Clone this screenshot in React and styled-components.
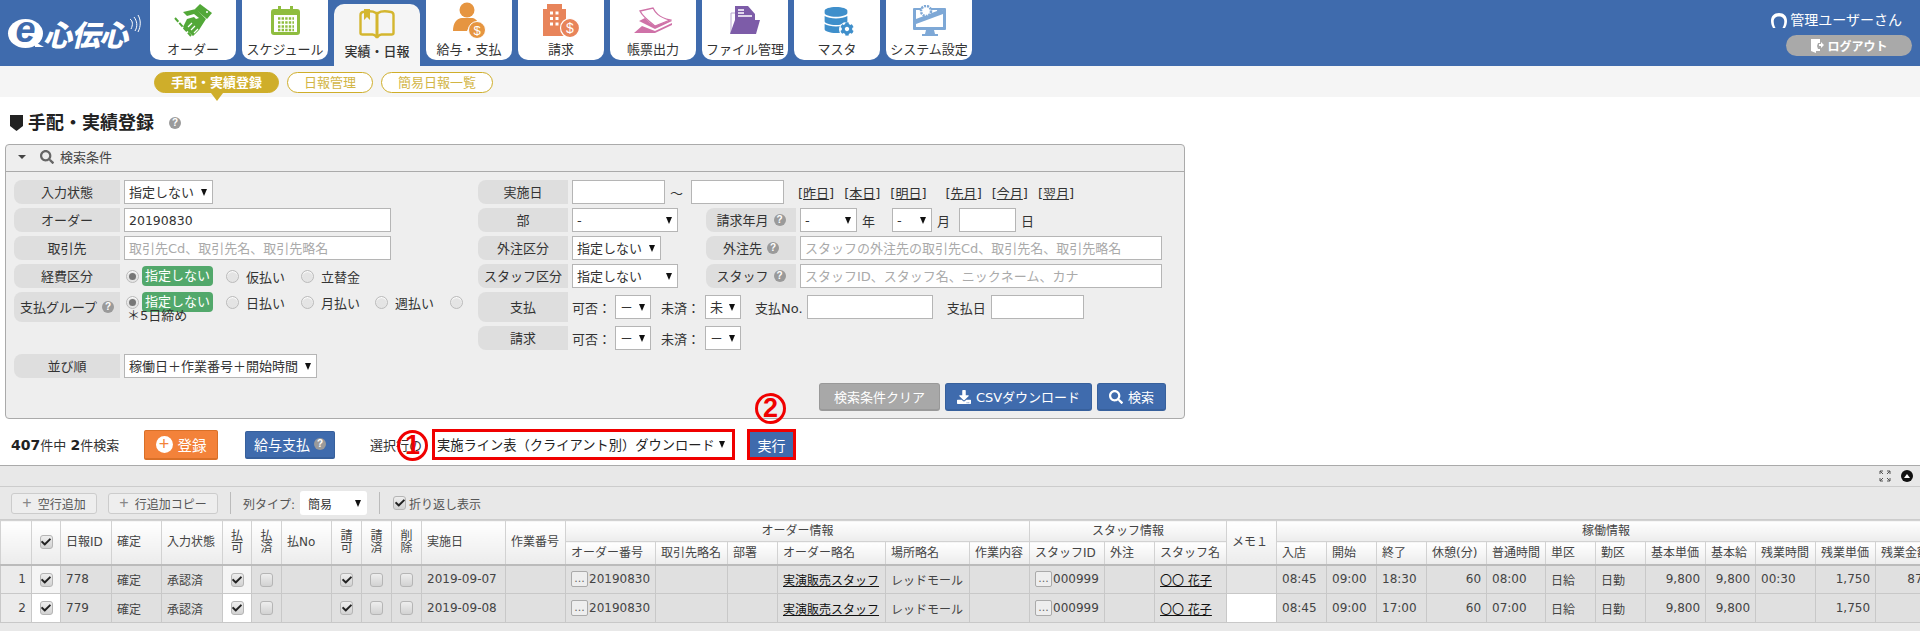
import React from 'react';
import styled, { createGlobalStyle } from 'styled-components';
import { FaSearch, FaDownload, FaCheck, FaDatabase, FaCog } from 'react-icons/fa';

const GlobalStyle = createGlobalStyle`
    html, body {
        margin: 0;
        height: 631px;
        overflow: hidden;
        background: #fff;
        color: #333;
        font-family: "DejaVu Sans", "Noto Sans CJK JP", sans-serif;
        font-size: 13px;
    }
    * { box-sizing: border-box; }
`;

const BLUE = '#3f6bad';
const GOLD = '#cfae2a';

const Page = styled.div`
    width: 1920px;
    height: 631px;
    overflow: hidden;
`;

/* ---------- header ---------- */

const TopBar = styled.header`
    height: 66px;
    background: ${BLUE};
    display: flex;
`;

const Logo = styled.div`
    width: 150px;
    display: flex;
    align-items: center;
    padding: 0 0 0 8px;
    color: #fff;
`;

const LogoE = styled.span`
    position: relative;
    width: 35px;
    height: 29px;
    border-radius: 50%;
    background: #fff;
    color: ${BLUE};
    font: italic bold 36px/22px "Liberation Sans", sans-serif;
    text-align: center;
    flex: none;

    &::after {
        content: "";
        position: absolute;
        right: -1px;
        bottom: 1px;
        border-left: 9px solid #fff;
        border-top: 5px solid transparent;
    }
`;

const LogoText = styled.span`
    font: 900 29px/1 "Noto Sans CJK JP", sans-serif;
    letter-spacing: -1px;
    transform: skewX(-14deg);
    margin-left: 3px;
    white-space: nowrap;
    flex: none;
`;

const LogoWaves = styled.svg`
    width: 12px;
    height: 20px;
    margin: -18px 0 0 -1px;
    flex: none;
`;

const Tabs = styled.nav`
    display: flex;
    gap: 6px;
`;

const Tab = styled.a`
    width: 86px;
    height: ${(p) => (p.$active ? '62px' : '60px')};
    margin-top: ${(p) => (p.$active ? '4px' : '0')};
    background: ${(p) => (p.$active ? '#f5f5f5' : '#fff')};
    border-radius: ${(p) => (p.$active ? '10px 10px 0 0' : '0 0 10px 10px')};
    display: flex;
    flex-direction: column;
    align-items: center;
    color: #333;
    font-size: 13px;
    font-weight: ${(p) => (p.$active ? 500 : 400)};
    line-height: 18px;
    white-space: nowrap;
`;

const TabIcon = styled.div`
    height: ${(p) => (p.$active ? '39px' : '41px')};
    display: flex;
    align-items: center;
    justify-content: center;
`;

const UserBox = styled.div`
    margin-left: auto;
    width: 150px;
    padding: 11px 8px 0 0;
    display: flex;
    flex-direction: column;
    align-items: flex-end;
`;

const UserName = styled.div`
    display: flex;
    align-items: center;
    gap: 3px;
    color: #fff;
    font-size: 14px;
    line-height: 18px;
    white-space: nowrap;
    padding-right: 10px;
`;

const LogoutPill = styled.a`
    width: 126px;
    height: 21px;
    margin-top: 6px;
    border-radius: 11px;
    background: #a9a9a9;
    color: #fff;
    font-size: 12px;
    font-weight: 700;
    display: flex;
    align-items: center;
    justify-content: center;
    gap: 3px;
`;

const SubNav = styled.nav`
    height: 31px;
    background: #f5f5f5;
    display: flex;
    gap: 8px;
    padding: 6px 0 0 154px;
`;

const Pill = styled.a`
    position: relative;
    height: 21px;
    padding: 0 16px;
    border-radius: 11px;
    border: 1px solid ${GOLD};
    background: ${(p) => (p.$active ? GOLD : '#fff')};
    color: ${(p) => (p.$active ? '#fff' : '#d2b545')};
    font-weight: ${(p) => (p.$active ? 700 : 400)};
    font-size: 13px;
    line-height: 19px;
    white-space: nowrap;

    ${(p) => p.$active && `
        &::after {
            content: "";
            position: absolute;
            left: 50%;
            top: 20px;
            margin-left: -6px;
            border: 6px solid transparent;
            border-top: 8px solid ${GOLD};
            border-bottom: 0;
        }
    `}
`;

/* ---------- title ---------- */

const TitleRow = styled.div`
    height: 47px;
    padding: 12px 0 0 10px;
    display: flex;
    align-items: center;
    gap: 5px;
`;

const TitleText = styled.h1`
    margin: 0 10px 8px 0;
    font-size: 18px;
    line-height: 24px;
    font-weight: 700;
    color: #222;
`;

const TitleMark = styled.svg`
    width: 13px;
    height: 17px;
    margin-bottom: 8px;
`;

const Help = styled.span`
    width: 12px;
    height: 12px;
    border-radius: 50%;
    background: #9a9a9a;
    color: #fff;
    font: bold 10px/12px "Liberation Sans", sans-serif;
    text-align: center;
    display: inline-block;
    flex: none;
    margin: ${(p) => p.$margin || '0'};
`;

/* ---------- search panel ---------- */

const Panel = styled.section`
    width: 1180px;
    height: 275px;
    margin-left: 5px;
    border: 1px solid #aaa;
    border-radius: 4px;
    background: #eee;
`;

const PanelHead = styled.div`
    height: 27px;
    border-bottom: 1px solid #aaa;
    display: flex;
    align-items: center;
    padding: 0 0 3px 12px;
    color: #444;
    font-size: 13px;
`;

const Caret = styled.span`
    border: 4px solid transparent;
    border-top: 4px solid #444;
    border-bottom: 0;
    margin-right: 14px;
`;

const Columns = styled.div`
    display: flex;
    padding: 8px 0 0 8px;
`;

const LeftColumn = styled.div`
    width: 464px;
`;

const RightColumn = styled.div`
    flex: 1;
`;

const Row = styled.div`
    display: flex;
    align-items: ${(p) => (p.$top ? 'flex-start' : 'center')};
    height: ${(p) => p.$h || 24}px;
    margin-bottom: ${(p) => p.$mb ?? 4}px;
    white-space: nowrap;
`;

const FieldLabel = styled.div`
    width: ${(p) => p.$w}px;
    height: ${(p) => p.$h || 24}px;
    margin-left: ${(p) => p.$ml || 0}px;
    margin-right: 4px;
    padding-bottom: 1px;
    flex: none;
    background: #dedede;
    border-radius: 8px 0 0 8px;
    display: flex;
    align-items: center;
    justify-content: center;
    color: #333;
    gap: 5px;
`;

const TextInput = styled.input`
    width: ${(p) => p.$w}px;
    height: 24px;
    margin-left: ${(p) => p.$ml || 0}px;
    border: 1px solid #b5b5b5;
    background: #fff;
    padding: 0 4px;
    color: #333;
    font: 12.5px "DejaVu Sans", "Noto Sans CJK JP", sans-serif;
    flex: none;

    &::placeholder {
        color: #aaa;
        font-size: 13px;
        opacity: 1;
    }
`;

const SelectWrap = styled.span`
    position: relative;
    display: inline-block;
    flex: none;
    width: ${(p) => p.$w}px;
    height: 24px;
    margin-left: ${(p) => p.$ml || 0}px;

    &::after {
        content: "";
        position: absolute;
        right: 6px;
        top: 9px;
        border: 3.5px solid transparent;
        border-top: 7px solid #111;
        border-bottom: 0;
        pointer-events: none;
    }
`;

const SelectBox = styled.select`
    appearance: none;
    width: 100%;
    height: 100%;
    border: 1px solid #b5b5b5;
    border-radius: 0;
    background: #fff;
    padding: 0 4px;
    color: #333;
    font: 13px "DejaVu Sans", "Noto Sans CJK JP", sans-serif;
`;

const Select = ({ w, ml, value }) => (
    <SelectWrap $w={w} $ml={ml}>
        <SelectBox defaultValue={value}><option>{value}</option></SelectBox>
    </SelectWrap>
);

const Unit = styled.span`
    margin-left: ${(p) => p.$ml || 0}px;
    flex: none;
`;

const DateLink = styled.a`
    margin-left: ${(p) => p.$ml || 0}px;
    color: #333;
    font-size: 13px;

    span { text-decoration: underline; }
`;

const RadioList = styled.div`
    display: flex;
    flex-wrap: wrap;
    align-items: center;
    width: 344px;
    padding-left: 2px;
    row-gap: 0;
`;

const RadioOption = styled.label`
    width: ${(p) => p.$w || 75}px;
    height: 20px;
    display: flex;
    align-items: center;
    gap: ${(p) => (p.$on ? '3px' : '7px')};
`;

const RadioDot = styled.span`
    width: 13px;
    height: 13px;
    border-radius: 50%;
    border: 1px solid #bbb;
    background: #e4e4e4;
    box-shadow: inset 0 1px 1px #fff;
    display: flex;
    align-items: center;
    justify-content: center;
    flex: none;

    ${(p) => p.$on && `
        &::after {
            content: "";
            width: 7px;
            height: 7px;
            border-radius: 50%;
            background: #777;
        }
    `}
`;

const OnBadge = styled.span`
    width: 71px;
    height: 20px;
    border-radius: 4px;
    background: #52a86b;
    color: #fff;
    text-align: center;
    line-height: 19px;
`;

const Note = styled.div`
    width: 100%;
    margin: -4px 0 0 1px;
    line-height: 15px;
`;

const Radio = ({ w, on, children }) => (
    <RadioOption $w={w} $on={on}>
        <RadioDot $on={on} />
        {on ? <OnBadge>{children}</OnBadge> : <span>{children}</span>}
    </RadioOption>
);

const PanelActions = styled.div`
    display: flex;
    justify-content: flex-end;
    gap: 5px;
    padding: 5px 18px 0 0;
`;

const PanelButton = styled.button`
    width: ${(p) => p.$w}px;
    height: 28px;
    border: 1px solid ${(p) => (p.$gray ? '#999' : '#37609c')};
    border-bottom-width: 2px;
    border-radius: 3px;
    background: ${(p) => (p.$gray ? '#a8a8a8' : BLUE)};
    color: #fff;
    font: 13px "DejaVu Sans", "Noto Sans CJK JP", sans-serif;
    display: flex;
    align-items: center;
    justify-content: center;
    gap: 5px;
    padding: 0;
    white-space: nowrap;
`;

/* ---------- action row ---------- */

const ActionRow = styled.div`
    height: 46px;
    display: flex;
    align-items: center;
    padding: 5px 0 0 11px;
    white-space: nowrap;
`;

const Count = styled.div`
    width: 133px;
    font-size: 13px;

    b { font-size: 14px; color: #222; }
`;

const OrangeButton = styled.button`
    width: 74px;
    height: 30px;
    border: 1px solid #d97028;
    border-bottom-width: 2px;
    border-radius: 2px;
    background: #f3823a;
    color: #fff;
    font: 14.5px "Noto Sans CJK JP", sans-serif;
    display: flex;
    align-items: center;
    justify-content: center;
    gap: 5px;
    padding: 0;
`;

const PlusCircle = styled.span`
    width: 17px;
    height: 17px;
    border-radius: 50%;
    background: #fff;
    color: #f3823a;
    font: 18px/16px "Liberation Sans", sans-serif;
    text-align: center;
`;

const PayButton = styled.button`
    width: 90px;
    height: 28px;
    margin-left: 27px;
    border: 1px solid #37609c;
    border-bottom-width: 2px;
    border-radius: 2px;
    background: ${BLUE};
    color: #fff;
    font: 14px "Noto Sans CJK JP", sans-serif;
    display: flex;
    align-items: center;
    justify-content: center;
    gap: 4px;
    padding: 0;
`;

const SelectLabel = styled.span`
    position: relative;
    margin-left: 35px;
    width: 62px;
    font-size: 13px;
    flex: none;
`;

const RedSelect = styled.div`
    width: 303px;
    height: 31px;
    border: 3px solid #f00000;
    background: #fff;
    display: flex;
    align-items: center;
    justify-content: space-between;
    padding: 0 7px 0 2px;
    font-size: 13.25px;
    color: #222;

    &::after {
        content: "";
        border: 3.5px solid transparent;
        border-top: 7px solid #111;
        border-bottom: 0;
    }
`;

const RunWrap = styled.div`
    position: relative;
    margin-left: 12px;
`;

const RunButton = styled.button`
    display: block;
    width: 49px;
    height: 31px;
    border: 3px solid #f00000;
    background: ${BLUE};
    color: #fff;
    font: 14px "Noto Sans CJK JP", sans-serif;
    padding: 0;
`;

const Marker = styled.span`
    position: absolute;
    left: ${(p) => p.$left}px;
    top: ${(p) => p.$top}px;
    width: 31px;
    height: 31px;
    border: 3px solid #f00000;
    border-radius: 50%;
    color: #f00000;
    font: bold 27px/25px "Liberation Sans", sans-serif;
    text-align: center;
`;

/* ---------- data grid ---------- */

const Grid = styled.section`
    height: 166px;
    overflow: hidden;
    background: #e8e8e8;
    border-top: 1px solid #aaa;
`;

const GridBar = styled.div`
    height: 21px;
    border-bottom: 1px solid #ccc;
    display: flex;
    align-items: center;
    justify-content: flex-end;
    gap: 10px;
    padding-right: 7px;
`;

const CollapseIcon = styled.span`
    width: 12px;
    height: 12px;
    border-radius: 50%;
    background: #111;
    display: flex;
    align-items: center;
    justify-content: center;

    &::after {
        content: "";
        border: 3px solid transparent;
        border-bottom: 4px solid #fff;
        border-top: 0;
    }
`;

const GridTools = styled.div`
    height: 33px;
    border-bottom: 1px solid #ccc;
    display: flex;
    align-items: center;
    padding-left: 11px;
    white-space: nowrap;
    font-size: 12px;
    color: #555;
`;

const ToolButton = styled.button`
    width: ${(p) => p.$w}px;
    height: 21px;
    margin-right: ${(p) => p.$mr || 0}px;
    border: 1px solid #ccc;
    border-radius: 3px;
    background: #eee;
    color: #555;
    font: 12px "Noto Sans CJK JP", sans-serif;
    padding: 0;
    display: flex;
    align-items: center;
    justify-content: center;
    gap: 6px;

    i { font: 16px/1 "Liberation Sans", sans-serif; color: #888; }
`;

const ToolSep = styled.span`
    width: 1px;
    height: 22px;
    background: #bbb;
    margin: 0 ${(p) => p.$r}px 0 ${(p) => p.$l}px;
`;

const TypeSelect = styled.div`
    width: 67px;
    height: 24px;
    margin-left: 5px;
    border-radius: 3px;
    background: #fff;
    color: #333;
    display: flex;
    align-items: center;
    justify-content: space-between;
    padding: 0 6px 0 8px;

    &::after {
        content: "";
        border: 3.5px solid transparent;
        border-top: 7px solid #111;
        border-bottom: 0;
    }
`;

const Table = styled.table`
    width: 1935px;
    table-layout: fixed;
    border-collapse: collapse;
    font-size: 12px;
    color: #444;
`;

const HeadCell = styled.th`
    height: ${(p) => p.$h || 21}px;
    padding: 0 ${(p) => (p.$narrow ? 0 : 5)}px;
    border: 1px solid #d2d2d2;
    border-bottom: ${(p) => (p.$group ? '1px solid #d2d2d2' : '2px solid #bbb')};
    background: linear-gradient(#fff, #ececec);
    font-weight: 400;
    text-align: ${(p) => (p.$center ? 'center' : 'left')};
    white-space: pre-line;
    line-height: 12px;
    overflow: hidden;
    ${(p) => p.$center && !p.$narrow && 'white-space: nowrap;'}
`;

const Cell = styled.td`
    height: 29px;
    padding: 0 ${(p) => (p.$center ? 0 : 5)}px;
    border: 1px solid #c8c8c8;
    background: ${(p) => p.$bg || '#e0e0e0'};
    text-align: ${(p) => (p.$align || 'left')};
    white-space: nowrap;
    overflow: hidden;
`;

const Box = styled.span`
    width: 13px;
    height: 14px;
    display: inline-flex;
    align-items: center;
    justify-content: center;
    vertical-align: middle;
    border: 1px solid #b5b5b5;
    border-radius: 3px;
    background: linear-gradient(#eee, #d2d2d2);
    color: #222;
    margin: ${(p) => p.$margin || '0'};
    flex: none;
`;

const CheckMark = ({ on = true, margin }) => (
    <Box $margin={margin}>{on && <FaCheck size={10} />}</Box>
);

const Lookup = styled.button`
    width: 17px;
    height: 16px;
    margin-right: 1px;
    border: 1px solid #aaa;
    border-radius: 2px;
    background: #eee;
    color: #666;
    font: 11px/10px "DejaVu Sans", sans-serif;
    padding: 0;
    vertical-align: middle;
`;

const CellLink = styled.a`
    color: #111;
    text-decoration: underline;
`;

const widths = [31, 29, 51, 50, 61, 29, 30, 50, 30, 30, 30, 84, 60, 90, 72, 50, 108, 84, 60, 75, 50, 72, 50, 50, 50, 50, 60, 59, 50, 50, 60, 50, 60, 60, 60];

const rows = [
    { no: 1, id: '778', date: '2019-09-07', end: '18:30', normal: '08:00', over: '00:30', overPay: '875', light: '#f5f5f5', memo: '#e4e4e4' },
    { no: 2, id: '779', date: '2019-09-08', end: '17:00', normal: '07:00', over: '', overPay: '', light: '#fff', memo: '#fff' },
];

const Icons = {
    handshake: (
        <svg width="40" height="36" viewBox="0 0 40 36">
            <path fill="#52a838" d="M27 1l12 9-5 6-12-10z" />
            <circle cx="34" cy="9" r="1" fill="#fff" />
            <path fill="#52a838" d="M10 9l13-3 10 10-7 11-6 6-10-9 4-8 7-2 2 2 3-1-5-4-7 2z" />
            <path stroke="#fff" strokeWidth="1.200" d="M18 27l4-4M21 30l4-4M15 24l4-4" />
            <path stroke="#52a838" strokeWidth="2" strokeDasharray="5 1.500" d="M2 15l16 18" />
        </svg>
    ),
    calendar: (
        <svg width="29" height="29" viewBox="0 0 29 29">
            <path fill="#8fbd3f" d="M3 3h4V0h3v3h9V0h3v3h4a3 3 0 0 1 3 3v20a3 3 0 0 1-3 3H3a3 3 0 0 1-3-3V6a3 3 0 0 1 3-3z" />
            <rect x="3" y="9" width="23" height="17" fill="#fff" />
            <path stroke="#8fbd3f" strokeWidth="2.4" strokeDasharray="2.4 1.2" d="M7 12.5h16M7 16.5h16M7 20.5h16M7 24h16" />
        </svg>
    ),
    book: (
        <svg width="36" height="30" viewBox="0 0 36 30" fill="none" stroke="#d4b62f" strokeWidth="2.4">
            <path d="M17 4C14 2 9 2 4 3c-2 .4-2.500 1.500-2.500 3v18c0 1 1 1.500 2 1.500h10c2 0 3 1 4 2.500h1c1-1.500 2-2.500 4-2.500h10c1 0 2-.5 2-1.500V6c0-1.500-.5-2.600-2.500-3C27 2 22 2 19 4z" />
            <path fill="#d4b62f" stroke="none" d="M5 0h6v11l-3-3-3 3zM16.500 4h3v24h-3z" />
        </svg>
    ),
    person: (
        <svg width="33" height="37" viewBox="0 0 33 37">
            <circle cx="14" cy="8" r="7.500" fill="#e69540" />
            <path fill="#e69540" d="M0 29c0-8 4-13 9-13h9c4 0 6 2 7 5a10 10 0 0 0-11 8z" />
            <circle cx="24" cy="28" r="8.500" fill="#e69540" stroke="#fff" strokeWidth="1" />
            <text x="24" y="33" fontSize="13" fill="#fff" textAnchor="middle" fontFamily="Liberation Sans">$</text>
        </svg>
    ),
    building: (
        <svg width="36" height="33" viewBox="0 0 36 33">
            <path fill="#e8845a" d="M0 5h4V0h15v5h4v27H0z" />
            <path stroke="#fff" strokeWidth="3" strokeDasharray="3 2.500" d="M7 9h10M7 14.500h10M7 20h10" />
            <circle cx="27" cy="24" r="9.500" fill="#e8845a" stroke="#fff" strokeWidth="1.200" />
            <text x="27" y="29" fontSize="14" fill="#fff" textAnchor="middle" fontFamily="Liberation Sans">$</text>
        </svg>
    ),
    papers: (
        <svg width="40" height="28" viewBox="0 0 40 28">
            <path fill="#fff" stroke="#cf72a8" strokeWidth="1.300" d="M7 4l13-3c2 4 5 9 17 12L22 19C17 15 10 10 7 4z" />
            <path fill="#cf72a8" d="M6 14l6-3c3 3 6 6 10 8l16-6 1 1-17 8zM1 26l8-7 13 5 17-8v2l-17 8z" />
        </svg>
    ),
    folder: (
        <svg width="30" height="29" viewBox="0 0 30 29">
            <path fill="#fff" stroke="#b8a8d0" strokeWidth="1" d="M1 7h5v20H1z" />
            <path fill="#7d5ca8" d="M5 0h13l7 8v7H5z" />
            <path stroke="#fff" strokeWidth="1.300" d="M8 4h6M8 7h6M8 10h14" />
            <path fill="#7d5ca8" d="M5 14h25l-4 14H0z" />
        </svg>
    ),
    monitor: (
        <svg width="33" height="32" viewBox="0 0 33 32">
            <path fill="#7ea8d6" d="M1 3h31a1 1 0 0 1 1 1v20a1 1 0 0 1-1 1H21l1 4h3v2H9v-2h3l1-4H1a1 1 0 0 1-1-1V4a1 1 0 0 1 1-1z" />
            <rect x="3" y="5" width="27" height="17" fill="#fff" />
            <path fill="#7ea8d6" d="M3 19l27-10v-3H24l-21 8z" />
            <circle cx="13" cy="6" r="5" fill="#fff" stroke="#7ea8d6" strokeWidth="2.500" strokeDasharray="2 1" />
            <circle cx="27" cy="6" r="3" fill="#7ea8d6" />
        </svg>
    ),
};

const DbIcon = styled.div`
    position: relative;
    color: #3f8fcb;
    height: 28px;
    width: 28px;
    display: flex;

    span {
        position: absolute;
        right: -3px;
        bottom: -2px;
        width: 15px;
        height: 15px;
        border-radius: 50%;
        background: #fff;
        display: flex;
        align-items: center;
        justify-content: center;
    }
`;

const tabs = [
    { label: 'オーダー', icon: Icons.handshake },
    { label: 'スケジュール', icon: Icons.calendar },
    { label: '実績・日報', icon: Icons.book, active: true },
    { label: '給与・支払', icon: Icons.person },
    { label: '請求', icon: Icons.building },
    { label: '帳票出力', icon: Icons.papers },
    { label: 'ファイル管理', icon: Icons.folder },
    { label: 'マスタ', icon: <DbIcon><FaDatabase size={26} /><span><FaCog size={14} /></span></DbIcon> },
    { label: 'システム設定', icon: Icons.monitor },
];

const Header = () => (
    <>
        <TopBar>
            <Logo>
                <LogoE>e</LogoE>
                <LogoText>心伝心</LogoText>
                <LogoWaves viewBox="0 0 12 20" fill="none" stroke="#fff" strokeWidth="1">
                    <path d="M1 5c3 2 3 6 1 10M5 3c3 4 4 9 1 14M9 1c3 5 3 11 0 17" />
                </LogoWaves>
            </Logo>
            <Tabs>
                {tabs.map((t) => (
                    <Tab key={t.label} $active={t.active}>
                        <TabIcon $active={t.active}>{t.icon}</TabIcon>
                        {t.label}
                    </Tab>
                ))}
            </Tabs>
            <UserBox>
                <UserName>
                    <svg width="16" height="15" viewBox="0 0 16 15" fill="#fff">
                        <path d="M8 0c5 0 8 3 8 8 0 3-1 5-2 7h-2.500c1-2 1.800-4 1.800-6.500C13.300 5 11 3.500 8 3.500S2.700 5 2.700 8.500C2.700 11 3.500 13 4.500 15H2C1 13 0 11 0 8c0-5 3-8 8-8z" />
                    </svg>
                    管理ユーザーさん
                </UserName>
                <LogoutPill>
                    <svg width="14" height="14" viewBox="0 0 14 14" fill="#fff">
                        <path d="M1 0h9v4H8l-1 3 1 3h2v2H6v2L1 12z" />
                        <path d="M9 5h2V3l3 3-3 3V7H9z" />
                    </svg>
                    ログアウト
                </LogoutPill>
            </UserBox>
        </TopBar>
        <SubNav>
            <Pill $active>手配・実績登録</Pill>
            <Pill>日報管理</Pill>
            <Pill>簡易日報一覧</Pill>
        </SubNav>
    </>
);

const SearchPanel = () => (
    <Panel>
        <PanelHead>
            <Caret />
            <FaSearch size={14} color="#666" style={{ marginRight: 6 }} />
            検索条件
        </PanelHead>
        <Columns>
            <LeftColumn>
                <Row>
                    <FieldLabel $w={106}>入力状態</FieldLabel>
                    <Select w={89} value="指定しない" />
                </Row>
                <Row>
                    <FieldLabel $w={106}>オーダー</FieldLabel>
                    <TextInput $w={267} defaultValue="20190830" readOnly />
                </Row>
                <Row>
                    <FieldLabel $w={106}>取引先</FieldLabel>
                    <TextInput $w={267} placeholder="取引先Cd、取引先名、取引先略名" />
                </Row>
                <Row>
                    <FieldLabel $w={106}>経費区分</FieldLabel>
                    <RadioList>
                        <Radio on w={100}>指定しない</Radio>
                        <Radio>仮払い</Radio>
                        <Radio>立替金</Radio>
                    </RadioList>
                </Row>
                <Row $h={30} $mb={32} $top>
                    <FieldLabel $w={106} $h={30}>支払グループ<Help>?</Help></FieldLabel>
                    <RadioList>
                        <Radio on w={100}>指定しない</Radio>
                        <Radio>日払い</Radio>
                        <Radio w={74}>月払い</Radio>
                        <Radio w={75}>週払い</Radio>
                        <Radio w={14} />
                        <Note>＊5日締め</Note>
                    </RadioList>
                </Row>
                <Row $mb={0}>
                    <FieldLabel $w={106}>並び順</FieldLabel>
                    <Select w={193} value="稼働日＋作業番号＋開始時間" />
                </Row>
            </LeftColumn>
            <RightColumn>
                <Row>
                    <FieldLabel $w={90}>実施日</FieldLabel>
                    <TextInput $w={93} />
                    <Unit $ml={5}>～</Unit>
                    <TextInput $w={93} $ml={8} />
                    <DateLink $ml={14}>[<span>昨日</span>]</DateLink>
                    <DateLink $ml={10}>[<span>本日</span>]</DateLink>
                    <DateLink $ml={10}>[<span>明日</span>]</DateLink>
                    <DateLink $ml={19}>[<span>先月</span>]</DateLink>
                    <DateLink $ml={10}>[<span>今月</span>]</DateLink>
                    <DateLink $ml={10}>[<span>翌月</span>]</DateLink>
                </Row>
                <Row>
                    <FieldLabel $w={90}>部</FieldLabel>
                    <Select w={106} value="-" />
                    <FieldLabel $w={90} $ml={28}>請求年月<Help>?</Help></FieldLabel>
                    <Select w={57} value="-" />
                    <Unit $ml={5}>年</Unit>
                    <Select w={40} ml={17} value="-" />
                    <Unit $ml={5}>月</Unit>
                    <TextInput $w={57} $ml={9} />
                    <Unit $ml={5}>日</Unit>
                </Row>
                <Row>
                    <FieldLabel $w={90}>外注区分</FieldLabel>
                    <Select w={89} value="指定しない" />
                    <FieldLabel $w={90} $ml={45}>外注先<Help>?</Help></FieldLabel>
                    <TextInput $w={362} placeholder="スタッフの外注先の取引先Cd、取引先名、取引先略名" />
                </Row>
                <Row>
                    <FieldLabel $w={90}>スタッフ区分</FieldLabel>
                    <Select w={106} value="指定しない" />
                    <FieldLabel $w={90} $ml={28}>スタッフ<Help>?</Help></FieldLabel>
                    <TextInput $w={362} placeholder="スタッフID、スタッフ名、ニックネーム、カナ" />
                </Row>
                <Row $h={30}>
                    <FieldLabel $w={90} $h={30}>支払</FieldLabel>
                    <Unit>可否：</Unit>
                    <Select w={36} ml={4} value="－" />
                    <Unit $ml={10}>未済：</Unit>
                    <Select w={36} ml={5} value="未" />
                    <Unit $ml={14}>支払No.</Unit>
                    <TextInput $w={126} $ml={4} />
                    <Unit $ml={14}>支払日</Unit>
                    <TextInput $w={93} $ml={5} />
                </Row>
                <Row $mb={0}>
                    <FieldLabel $w={90}>請求</FieldLabel>
                    <Unit>可否：</Unit>
                    <Select w={36} ml={4} value="－" />
                    <Unit $ml={10}>未済：</Unit>
                    <Select w={36} ml={5} value="－" />
                </Row>
            </RightColumn>
        </Columns>
        <PanelActions>
            <PanelButton $gray $w={121}>検索条件クリア</PanelButton>
            <PanelButton $w={147}><FaDownload size={14} />CSVダウンロード</PanelButton>
            <PanelButton $w={69}><FaSearch size={14} />検索</PanelButton>
        </PanelActions>
    </Panel>
);

const Actions = () => (
    <ActionRow>
        <Count><b>407</b>件中 <b>2</b>件検索</Count>
        <OrangeButton><PlusCircle>+</PlusCircle>登録</OrangeButton>
        <PayButton>給与支払<Help>?</Help></PayButton>
        <SelectLabel>
            選択行の
            <Marker $left={27} $top={-5}>1</Marker>
        </SelectLabel>
        <RedSelect>実施ライン表（クライアント別）ダウンロード</RedSelect>
        <RunWrap>
            <RunButton>実行</RunButton>
            <Marker $left={8} $top={-36}>2</Marker>
        </RunWrap>
    </ActionRow>
);

const DataGrid = () => (
    <Grid>
        <GridBar>
            <svg width="12" height="12" viewBox="0 0 12 12" fill="none" stroke="#555" strokeWidth="1">
                <path d="M1 4V1h3M8 1h3v3M11 8v3H8M4 11H1V8M1 1l3 3M11 1L8 4M11 11L8 8M1 11l3-3" />
            </svg>
            <CollapseIcon />
        </GridBar>
        <GridTools>
            <ToolButton $w={86} $mr={11}><i>+</i>空行追加</ToolButton>
            <ToolButton $w={110}><i>+</i>行追加コピー</ToolButton>
            <ToolSep $l={12} $r={12} />
            列タイプ:
            <TypeSelect>簡易</TypeSelect>
            <ToolSep $l={12} $r={13} />
            <CheckMark margin="0 3px 0 0" />
            折り返し表示
        </GridTools>
        <Table>
            <colgroup>
                {widths.map((w, i) => <col key={i} style={{ width: w }} />)}
            </colgroup>
            <thead>
                <tr>
                    <HeadCell rowSpan={2} />
                    <HeadCell rowSpan={2} $center $narrow><CheckMark /></HeadCell>
                    <HeadCell rowSpan={2}>日報ID</HeadCell>
                    <HeadCell rowSpan={2}>確定</HeadCell>
                    <HeadCell rowSpan={2}>入力状態</HeadCell>
                    <HeadCell rowSpan={2} $center $narrow>{'払\n可'}</HeadCell>
                    <HeadCell rowSpan={2} $center $narrow>{'払\n済'}</HeadCell>
                    <HeadCell rowSpan={2}>払No</HeadCell>
                    <HeadCell rowSpan={2} $center $narrow>{'請\n可'}</HeadCell>
                    <HeadCell rowSpan={2} $center $narrow>{'請\n済'}</HeadCell>
                    <HeadCell rowSpan={2} $center $narrow>{'削\n除'}</HeadCell>
                    <HeadCell rowSpan={2}>実施日</HeadCell>
                    <HeadCell rowSpan={2}>作業番号</HeadCell>
                    <HeadCell colSpan={6} $group $center>オーダー情報</HeadCell>
                    <HeadCell colSpan={3} $group $center>スタッフ情報</HeadCell>
                    <HeadCell rowSpan={2}>メモ１</HeadCell>
                    <HeadCell colSpan={12} $group $center>稼働情報</HeadCell>
                </tr>
                <tr>
                    {['オーダー番号', '取引先略名', '部署', 'オーダー略名', '場所略名', '作業内容', 'スタッフID', '外注', 'スタッフ名',
                        '入店', '開始', '終了', '休憩(分)', '普通時間', '単区', '勤区', '基本単価', '基本給', '残業時間', '残業単価', '残業金額'].map((h) => (
                        <HeadCell key={h} $h={23}>{h}</HeadCell>
                    ))}
                </tr>
            </thead>
            <tbody>
                {rows.map((r) => (
                    <tr key={r.no}>
                        <Cell $bg="#ebebeb" $align="right">{r.no}</Cell>
                        <Cell $bg={r.light} $center $align="center"><CheckMark /></Cell>
                        <Cell>{r.id}</Cell>
                        <Cell>確定</Cell>
                        <Cell>承認済</Cell>
                        <Cell $bg={r.light} $center $align="center"><CheckMark /></Cell>
                        <Cell $center $align="center"><CheckMark on={false} /></Cell>
                        <Cell />
                        <Cell $center $align="center"><CheckMark /></Cell>
                        <Cell $center $align="center"><CheckMark on={false} /></Cell>
                        <Cell $center $align="center"><CheckMark on={false} /></Cell>
                        <Cell>{r.date}</Cell>
                        <Cell />
                        <Cell><Lookup>...</Lookup>20190830</Cell>
                        <Cell />
                        <Cell />
                        <Cell><CellLink>実演販売スタッフ</CellLink></Cell>
                        <Cell>レッドモール</Cell>
                        <Cell />
                        <Cell><Lookup>...</Lookup>000999</Cell>
                        <Cell />
                        <Cell><CellLink>〇〇 花子</CellLink></Cell>
                        <Cell $bg={r.memo} />
                        <Cell>08:45</Cell>
                        <Cell>09:00</Cell>
                        <Cell>{r.end}</Cell>
                        <Cell $align="right">60</Cell>
                        <Cell>{r.normal}</Cell>
                        <Cell>日給</Cell>
                        <Cell>日勤</Cell>
                        <Cell $align="right">9,800</Cell>
                        <Cell $align="right">9,800</Cell>
                        <Cell>{r.over}</Cell>
                        <Cell $align="right">1,750</Cell>
                        <Cell $align="right">{r.overPay}</Cell>
                    </tr>
                ))}
            </tbody>
        </Table>
    </Grid>
);

export default function App() {
    return (
        <Page>
            <GlobalStyle />
            <Header />
            <TitleRow>
                <TitleMark viewBox="0 0 13 17"><path fill="#222" d="M0 1h13v11l-6.500 5L0 12z" /></TitleMark>
                <TitleText>手配・実績登録</TitleText>
                <Help $margin="0 0 8px">?</Help>
            </TitleRow>
            <SearchPanel />
            <Actions />
            <DataGrid />
        </Page>
    );
}
